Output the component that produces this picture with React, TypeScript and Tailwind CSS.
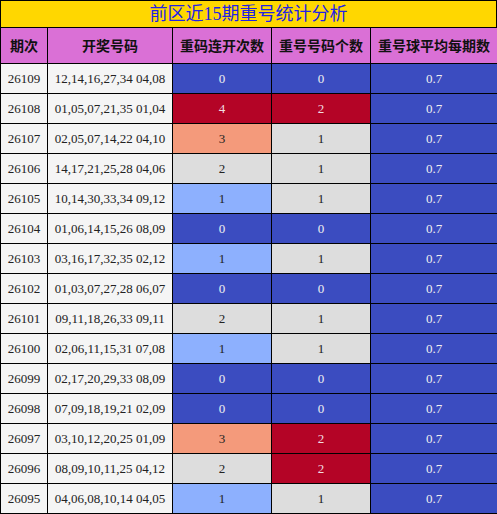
import React from 'react';

const rows: [string, string, number, number][] = [
  ['26109', '12,14,16,27,34 04,08', 0, 0],
  ['26108', '01,05,07,21,35 01,04', 4, 2],
  ['26107', '02,05,07,14,22 04,10', 3, 1],
  ['26106', '14,17,21,25,28 04,06', 2, 1],
  ['26105', '10,14,30,33,34 09,12', 1, 1],
  ['26104', '01,06,14,15,26 08,09', 0, 0],
  ['26103', '03,16,17,32,35 02,12', 1, 1],
  ['26102', '01,03,07,27,28 06,07', 0, 0],
  ['26101', '09,11,18,26,33 09,11', 2, 1],
  ['26100', '02,06,11,15,31 07,08', 1, 1],
  ['26099', '02,17,20,29,33 08,09', 0, 0],
  ['26098', '07,09,18,19,21 02,09', 0, 0],
  ['26097', '03,10,12,20,25 01,09', 3, 2],
  ['26096', '08,09,10,11,25 04,12', 2, 2],
  ['26095', '04,06,08,10,14 04,05', 1, 1],
];

// coolwarm style fills
const streakCls: Record<number, string> = {
  0: 'bg-[#3b4cc0] text-[#f0f0f0]',
  1: 'bg-[#8db0fe] text-[#222]',
  2: 'bg-[#dddddd] text-[#222]',
  3: 'bg-[#f49a7b] text-[#222]',
  4: 'bg-[#b40426] text-[#f0dde0]',
};
const countCls: Record<number, string> = {
  0: 'bg-[#3b4cc0] text-[#f0f0f0]',
  1: 'bg-[#dddddd] text-[#222]',
  2: 'bg-[#b40426] text-[#f0dde0]',
};

const grid = 'grid grid-cols-[47px_125px_99px_99px_127px]';
const cell = 'flex items-center justify-center border-r border-b border-black';

export default function App() {
  return (
    <div className="w-[497px] h-[514px] bg-white font-['Liberation_Serif','Noto_Sans_CJK_SC',serif]">
      <div className="h-[28px] border border-black bg-[#ffd700] flex items-center justify-center text-[18px] leading-none text-[#2222e6]">
        前区近15期重号统计分析
      </div>
      <div className={`${grid} border-l border-black`}>
        {['期次', '开奖号码', '重码连开次数', '重号号码个数', '重号球平均每期数'].map((h) => (
          <div key={h} className={`${cell} h-[36px] bg-[#da70d6] text-[14px] font-bold text-[#111] font-['Noto_Sans_CJK_SC',sans-serif]`}>
            {h}
          </div>
        ))}
        {rows.map(([issue, nums, streak, count]) => (
          <React.Fragment key={issue}>
            <div className={`${cell} h-[30px] bg-[#f5f5f5] text-[13px] text-[#222]`}>{issue}</div>
            <div className={`${cell} h-[30px] bg-[#f5f5f5] text-[13px] text-[#222]`}>{nums}</div>
            <div className={`${cell} h-[30px] text-[13px] ${streakCls[streak]}`}>{streak}</div>
            <div className={`${cell} h-[30px] text-[13px] ${countCls[count]}`}>{count}</div>
            <div className={`${cell} h-[30px] text-[13px] bg-[#3b4cc0] text-[#f0f0f0]`}>0.7</div>
          </React.Fragment>
        ))}
      </div>
    </div>
  );
}
